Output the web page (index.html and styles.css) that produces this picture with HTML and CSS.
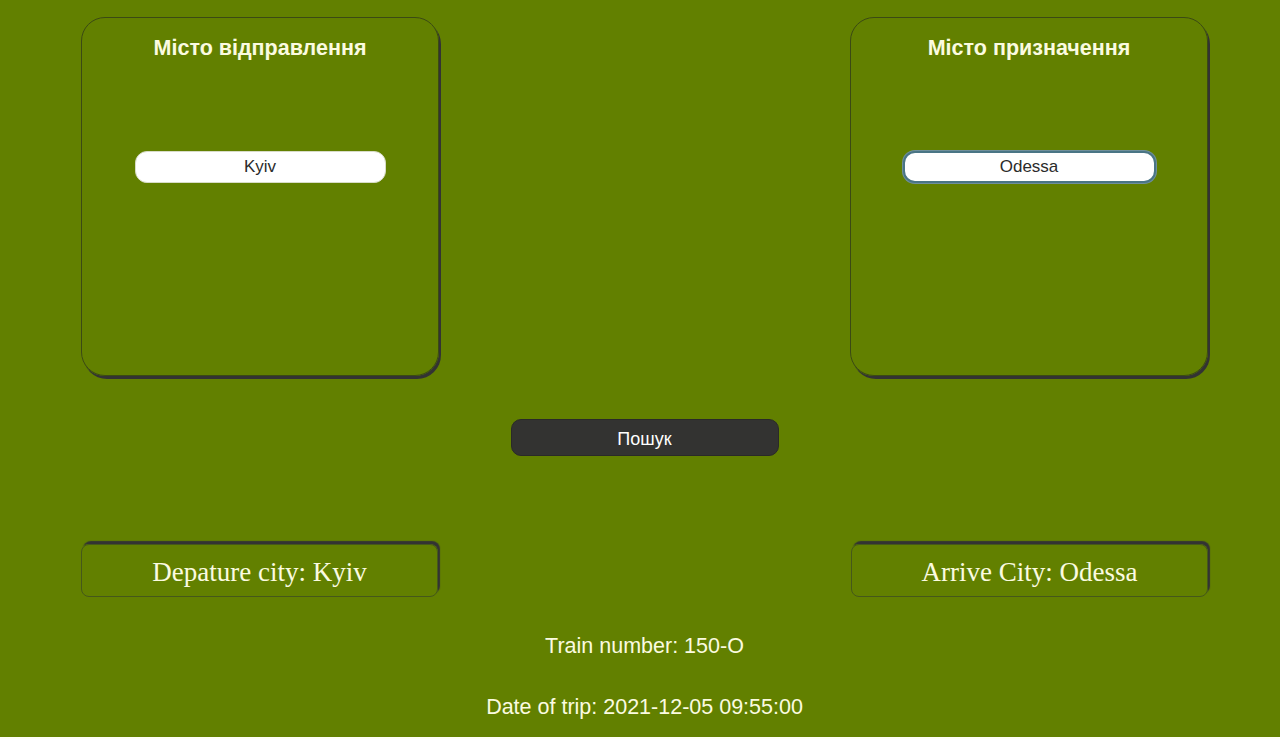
FILE: index.html
```html
<!DOCTYPE html>
<html lang="uk">
<head>
<meta charset="utf-8">
<title>Пошук поїздів</title>
<link rel="stylesheet" href="styles.css">
</head>
<body>
<div class="page">
  <div class="cards">
    <section class="card">
      <h2 class="card-title">Місто відправлення</h2>
      <input class="city-input" type="text" value="Kyiv">
    </section>
    <section class="card">
      <h2 class="card-title">Місто призначення</h2>
      <input class="city-input focused" type="text" value="Odessa">
    </section>
  </div>
  <div class="actions">
    <button class="search-btn" type="button">Пошук</button>
  </div>
  <div class="results">
    <div class="result-box">Depature city: Kyiv</div>
    <div class="result-box">Arrive City: Odessa</div>
  </div>
  <p class="info info-first">Train number: 150-O</p>
  <p class="info">Date of trip: 2021-12-05 09:55:00</p>
</div>
</body>
</html>
```

FILE: styles.css
```css
html, body {
  margin: 0;
  padding: 0;
  background: #fffff4;
}

.page {
  background: #628000;
  height: 737px;
  box-sizing: border-box;
  padding: 17px 72px 0 81px;
  font-family: "Liberation Sans", Arial, sans-serif;
  color: #fbfbe0;
}

.cards {
  display: flex;
  justify-content: space-between;
}

.card {
  width: 356px;
  height: 357px;
  border: 1px solid #3b4a14;
  border-radius: 24px;
  box-shadow: 2px 3px 0 #333;
  display: flex;
  flex-direction: column;
  align-items: center;
}

.card-title {
  margin: 18px 0 0;
  font-size: 21.5px;
  line-height: 25px;
  font-weight: bold;
  color: #fbfbe0;
}

.city-input {
  margin-top: 90px;
  width: 251px;
  height: 32px;
  box-sizing: border-box;
  border: 1px solid #d8dcc8;
  border-radius: 12px;
  background: #fff;
  text-align: center;
  font-family: "Liberation Sans", Arial, sans-serif;
  font-size: 17px;
  color: #2b2b2b;
  padding: 0 8px;
  outline: none;
}

.city-input.focused {
  width: 253px;
  border: 2px solid #4a7585;
  box-shadow: 0 0 0 1px #6f8f9c;
}

.actions {
  display: flex;
  justify-content: center;
  margin-top: 43px;
}

.search-btn {
  width: 268px;
  height: 37px;
  padding-top: 4px;
  background: #333331;
  border: 1px solid #2a2a28;
  border-radius: 10px;
  color: #ffffff;
  font-family: "Liberation Sans", Arial, sans-serif;
  font-size: 18px;
  cursor: pointer;
}

.results {
  display: flex;
  justify-content: space-between;
  margin-top: 88px;
}

.result-box {
  width: 357px;
  height: 53px;
  box-sizing: border-box;
  padding-top: 4px;
  border: 1px solid #45581a;
  border-radius: 8px;
  box-shadow: 2px -3px 1px #333;
  display: flex;
  align-items: center;
  justify-content: center;
  font-family: "Liberation Serif", "Times New Roman", serif;
  font-size: 27px;
  color: #fbfbe0;
}

.info {
  margin: 0;
  text-align: center;
  font-size: 21.5px;
  line-height: 25px;
  color: #fbfbe0;
  margin-top: 36px;
}

.info-first {
  margin-top: 37px;
}
```
